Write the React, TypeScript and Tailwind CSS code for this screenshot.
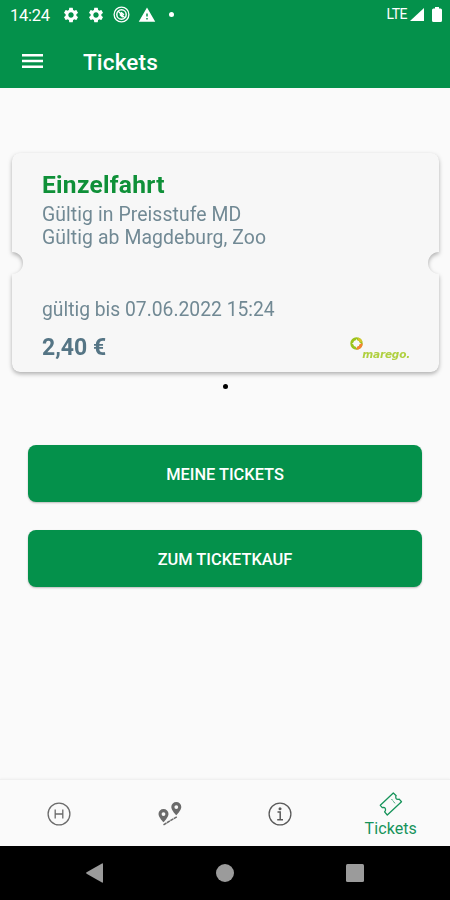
import { MdSettings, MdWarning } from 'react-icons/md'

const ACTIONS = ['MEINE TICKETS', 'ZUM TICKETKAUF']

function StatusBar() {
  return (
    <div className="flex h-[34px] items-start pl-[10px] pr-2 pt-[5px] text-white">
      <span className="mt-[1px] w-[52px] text-[16.5px] leading-5 tracking-[-0.25px]">14:24</span>
      <MdSettings className="mt-[1px] size-[18px]" />
      <MdSettings className="ml-[7px] mt-[1px] size-[18px]" />
      <svg className="ml-2 mt-[1px] size-[17px]" viewBox="0 0 17 17" fill="none" stroke="white">
        <circle cx="8.5" cy="8.5" r="7.4" strokeWidth="1.3" />
        <circle cx="8.5" cy="8.5" r="4.7" strokeWidth="1.5" />
        <path d="M5 5l7 7M6.800 8.500l3 2.800M8 6.200l3 2.600" strokeWidth="1.3" />
      </svg>
      <MdWarning className="ml-2 mt-[1px] size-[18px]" />
      <span className="ml-[13px] mt-[7px] size-[5px] rounded-full bg-white" />
      <span className="ml-auto text-[14px] leading-[19px] tracking-[-0.5px]">LTE</span>
      <svg className="ml-[3px] mt-[3px] h-[13px] w-[14px]" viewBox="0 0 14 13" fill="white">
        <path d="M14 0v13H0z" />
      </svg>
      <svg className="ml-2 mt-[2px] h-[15px] w-[10px]" viewBox="0 0 10 15" fill="white">
        <path d="M3 0h4v1.5h1.5Q10 1.5 10 3v10.5q0 1.5-1.500 1.500h-7Q0 15 0 13.500V3Q0 1.500 1.500 1.500H3z" />
      </svg>
    </div>
  )
}

function MaregoLogo() {
  return (
    <div className="flex items-start">
      <svg className="mt-[4px] size-[13px]" viewBox="0 0 13 13" fill="none" strokeWidth="3">
        <circle cx="6.500" cy="6.500" r="4.700" stroke="#9bc31c" />
        <path d="M11.200 6.500A4.700 4.700 0 0 1 6.500 11.200" stroke="#f58232" />
        <path d="M8 1.900A4.700 4.700 0 0 1 11.100 5" stroke="#d3c62a" />
        <path d="M6.500 1.800l1.400 3.300 3.300 1.400-3.300 1.400-1.400 3.300-1.400-3.300-3.300-1.400 3.300-1.400z" fill="#f7f7f7" />
      </svg>
      <span className="-ml-[1px] mt-[14px] font-['DejaVu_Sans',sans-serif] text-[10.500px] font-bold italic leading-[14px] tracking-[-0.2px] text-[#b0d040]">
        marego.
      </span>
    </div>
  )
}

function TicketCard() {
  return (
    <div className="ml-3 mr-[11px] mt-[65px] drop-shadow-[0_2px_2px_rgba(0,0,0,0.3)]">
      <div className="flex h-[219px] flex-col rounded-[8px] bg-[#f7f7f7] pl-[30px] pr-[29px] pt-[17px] text-[#718994] [mask-composite:intersect] [mask-image:radial-gradient(circle_at_0px_110px,transparent_10.5px,black_11.5px),radial-gradient(circle_at_100%_110px,transparent_10.5px,black_11.5px)]">
        <h2 className="text-[24.5px] font-bold leading-[30px] tracking-[0.3px] text-[#0f9038]">Einzelfahrt</h2>
        <p className="mt-[3px] text-[19.4px] leading-[23px] tracking-[0.08px]">Gültig in Preisstufe MD</p>
        <p className="text-[19.4px] leading-[23px] tracking-[0.08px]">Gültig ab Magdeburg, Zoo</p>
        <p className="mt-[49px] text-[19.3px] leading-[23px]">gültig bis 07.06.2022 15:24</p>
        <div className="mt-[12px] flex items-start justify-between">
          <span className="mt-[1px] text-[23px] font-bold leading-[28px] text-[#557585]">2,40 €</span>
          <MaregoLogo />
        </div>
      </div>
    </div>
  )
}

function RouteIcon() {
  return (
    <svg className="size-6" viewBox="0 0 24 24" fill="#6b6b6b">
      <path
        fillRule="evenodd"
        d="M5.500 7a5 5 0 0 1 5 5c0 3.300-5 8.300-5 8.300s-5-5-5-8.300a5 5 0 0 1 5-5zm0 3.200a1.900 1.900 0 1 0 0 3.800 1.900 1.900 0 0 0 0-3.800zM18.300 0a5 5 0 0 1 5 5c0 3.300-5 8.300-5 8.300s-5-5-5-8.300a5 5 0 0 1 5-5zm0 3.200a1.900 1.900 0 1 0 0 3.800 1.900 1.900 0 0 0 0-3.800z"
      />
      <path d="M5.500 22.800L18.800 14.800" fill="none" stroke="#6b6b6b" strokeWidth="1.500" strokeDasharray="3.500 .5" />
    </svg>
  )
}

function BottomNav() {
  return (
    <nav className="grid h-[67px] grid-cols-4 border-t border-[#f0f0f0] bg-[#fafafa] pl-1 pr-1 pt-[1px] shadow-[0_-1px_2px_rgba(0,0,0,0.03)]">
      <button type="button" className="flex items-center justify-center">
        <svg className="size-6" viewBox="0 0 24 24" fill="none" stroke="#6b6b6b">
          <circle cx="12" cy="12" r="10.900" strokeWidth="1.300" />
          <path d="M8.200 7.500v9M15.800 7.500v9M8.200 12h7.600" strokeWidth="1.300" />
        </svg>
      </button>
      <button type="button" className="flex items-center justify-center">
        <RouteIcon />
      </button>
      <button type="button" className="flex items-center justify-center">
        <svg className="size-6" viewBox="0 0 24 24" fill="none" stroke="#5a5a5a">
          <circle cx="12" cy="12" r="10.900" strokeWidth="1.300" />
          <path d="M9.500 10h2.700v7.500M9.200 17.700h5.800" strokeWidth="1.500" />
          <circle cx="12" cy="6.700" r="1.500" fill="#5a5a5a" stroke="none" />
        </svg>
      </button>
      <button type="button" className="flex flex-col items-center pt-[11px] text-[#16935a]">
        <svg className="size-6" viewBox="0 0 24 24" fill="none" stroke="currentColor" strokeWidth="1.300" strokeLinejoin="round">
          <path d="M14.300 1L1.300 13.300l2 2.400q2.700-.800 3.200 1.400.300 1.800-.900 2.700l2.700 3.200L22.500 9.700l-2.300-2.600q-2.200.900-3.200-.800-.700-1.500.200-2.600z" />
          <path d="M12.500 7l4 5" strokeWidth=".9" strokeDasharray="2 1" />
        </svg>
        <span className="mt-[3px] text-[16px] leading-5 tracking-[0.1px]">Tickets</span>
      </button>
    </nav>
  )
}

export default function App() {
  return (
    <div className="flex h-[900px] w-[450px] flex-col overflow-hidden bg-[#fafafa] font-['Roboto','Liberation_Sans',sans-serif]">
      <header className="h-[88px] shrink-0 bg-[#04914b]">
        <StatusBar />
        <div className="flex h-[54px] items-center pl-[22px] text-white">
          <svg className="mr-10 h-[15px] w-[21px]" viewBox="0 0 21 15" fill="white">
            <path d="M0 0h21v2.500H0zM0 5.800h21v2.500H0zM0 11.600h21v2.500H0z" />
          </svg>
          <h1 className="pt-[1px] text-[22.5px] font-medium leading-7 tracking-[0.15px]">Tickets</h1>
        </div>
      </header>

      <main className="flex flex-1 flex-col">
        <TicketCard />
        <span className="mx-auto mt-[12px] size-[5px] rounded-full bg-black" />
        <div className="mt-[56px] flex flex-col gap-7 px-7">
          {ACTIONS.map(label => (
            <button
              key={label}
              type="button"
              className="h-[57px] rounded-[8px] bg-[#04914b] pt-[3px] text-[16.4px] font-medium text-white shadow-[0_1px_2px_rgba(0,0,0,0.25)]"
            >
              {label}
            </button>
          ))}
        </div>
      </main>

      <BottomNav />

      {/* Android system navigation */}
      <div className="grid h-[54px] shrink-0 grid-cols-3 items-center bg-black pl-[30px] pr-[29px]">
        <svg className="ml-[56px] h-[20px] w-[17px]" viewBox="0 0 17 20" fill="#9b9b9b">
          <path d="M16 .500q1-.500 1 .700v17.600q0 1.200-1 .700L.600 10.700q-1-.700 0-1.400z" />
        </svg>
        <span className="mx-auto size-[18px] rounded-full bg-[#9b9b9b]" />
        <span className="ml-[55px] size-[18px] rounded-[1.500px] bg-[#9b9b9b]" />
      </div>
    </div>
  )
}
